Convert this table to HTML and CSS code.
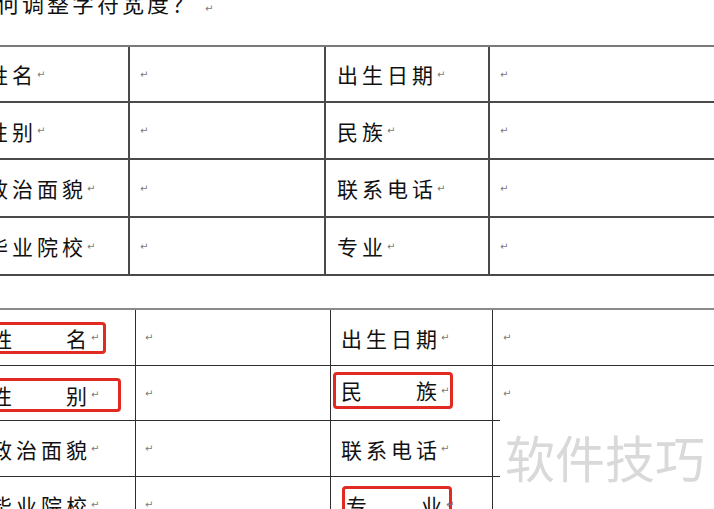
FILE: index.html
```html
<!DOCTYPE html>
<html lang="zh-CN">
<head>
<meta charset="utf-8">
<title>如何调整字符宽度</title>
<link rel="stylesheet" href="styles.css">
</head>
<body>
<div class="page">
  <p class="title">何调整字符宽度？<span class="ret ret-title">↵</span></p>

  <div class="tbl t1">
    <div class="c lab">姓名<span class="ret">↵</span></div>
    <div class="c val"><span class="ret">↵</span></div>
    <div class="c lab2">出生日期<span class="ret">↵</span></div>
    <div class="c val2"><span class="ret">↵</span></div>

    <div class="c lab">性别<span class="ret">↵</span></div>
    <div class="c val"><span class="ret">↵</span></div>
    <div class="c lab2">民族<span class="ret">↵</span></div>
    <div class="c val2"><span class="ret">↵</span></div>

    <div class="c lab">政治面貌<span class="ret">↵</span></div>
    <div class="c val"><span class="ret">↵</span></div>
    <div class="c lab2">联系电话<span class="ret">↵</span></div>
    <div class="c val2"><span class="ret">↵</span></div>

    <div class="c lab">毕业院校<span class="ret">↵</span></div>
    <div class="c val"><span class="ret">↵</span></div>
    <div class="c lab2">专业<span class="ret">↵</span></div>
    <div class="c val2"><span class="ret">↵</span></div>
  </div>

  <div class="tbl t2">
    <div class="c lab"><span class="box box-a">姓　　名<span class="ret">↵</span></span></div>
    <div class="c val"><span class="ret">↵</span></div>
    <div class="c lab2">出生日期<span class="ret">↵</span></div>
    <div class="c val2"><span class="ret">↵</span></div>

    <div class="c lab"><span class="box box-b">性　　别<span class="ret">↵</span></span></div>
    <div class="c val"><span class="ret">↵</span></div>
    <div class="c lab2"><span class="box box-c">民　　族<span class="ret">↵</span></span></div>
    <div class="c val2 tall"><span class="ret">↵</span></div>

    <div class="c lab">政治面貌<span class="ret">↵</span></div>
    <div class="c val"><span class="ret">↵</span></div>
    <div class="c lab2 ext">联系电话<span class="ret">↵</span></div>

    <div class="c lab">毕业院校<span class="ret">↵</span></div>
    <div class="c val"><span class="ret">↵</span></div>
    <div class="c lab2 ext"><span class="box box-d">专　　业<span class="ret">↵</span></span></div>
  </div>

  <div class="wm">软件技巧</div>
</div>
</body>
</html>
```

FILE: styles.css
```css
html, body {
  margin: 0;
  padding: 0;
  background: #ffffff;
}

body {
  font-family: "Noto Sans CJK SC", "Noto Sans", sans-serif;
  color: #111111;
  overflow: hidden;
}

.page {
  position: relative;
  width: 714px;
  height: 509px;
  overflow: hidden;
}

.title {
  margin: -10px 0 0 -3px;
  height: 24px;
  font-size: 22px;
  line-height: 24px;
  letter-spacing: 3px;
  white-space: nowrap;
}

.ret {
  font-family: "DejaVu Sans", sans-serif;
  font-size: 10px;
  color: #7a7a7a;
  letter-spacing: 0;
}

.ret-title {
  margin-left: 8px;
}

.tbl {
  display: grid;
  margin-left: -40px;
  width: 800px;
}

.t1 {
  margin-top: 31px;
  background: #4a4a4a;
  border-top: 2px solid #7a7a7a;
  padding-bottom: 2px;
  gap: 2px;
  grid-template-columns: 168px 194px 162px 1fr;
  grid-template-rows: 54px 55px 56px 56px;
}

.t2 {
  margin-top: 32px;
  background: #2e2e2e;
  border-top: 2px solid #8a8a8a;
  gap: 1px;
  grid-template-columns: 175px 194px 161px 1fr;
  grid-template-rows: 55px 54px 55px 55px;
}

.c {
  background: #ffffff;
  display: flex;
  align-items: center;
  font-size: 21px;
  letter-spacing: 4px;
  white-space: nowrap;
}

.t1 .lab { padding-left: 27px; }
.t1 .val { padding-left: 10px; }
.t1 .lab2 { padding-left: 11px; }
.t1 .val2 { padding-left: 10px; }

.t2 .lab { padding-left: 31px; }
.t2 .val { padding-left: 9px; }
.t2 .lab2 { padding-left: 10px; }
.t2 .val2 { padding-left: 10px; }

.t2 .tall {
  grid-row: span 3;
  align-items: flex-start;
  padding-top: 22px;
}

.ext {
  position: relative;
}

.ext::after {
  content: "";
  position: absolute;
  left: 100%;
  top: -1px;
  width: 8px;
  height: 1px;
  background: #2e2e2e;
}

.box {
  display: inline-flex;
  align-items: center;
  box-sizing: border-box;
  border: 3px solid #e02a22;
  border-radius: 4px;
  flex: none;
}

.box-a {
  width: 127px;
  height: 32px;
  margin-left: -12px;
  padding-left: 9px;
}

.box-b {
  width: 142px;
  height: 34px;
  margin-left: -12px;
  padding-left: 9px;
  margin-top: 3px;
}

.box-c {
  width: 120px;
  height: 37px;
  margin-left: -8px;
  padding-left: 5px;
  margin-bottom: 6px;
}

.box-d {
  width: 110px;
  height: 37px;
  margin-left: 1px;
  padding-left: 1px;
}

.wm {
  position: absolute;
  left: 505px;
  top: 426px;
  font-size: 50px;
  line-height: 60px;
  color: #d9d9d9;
  white-space: nowrap;
}
```
